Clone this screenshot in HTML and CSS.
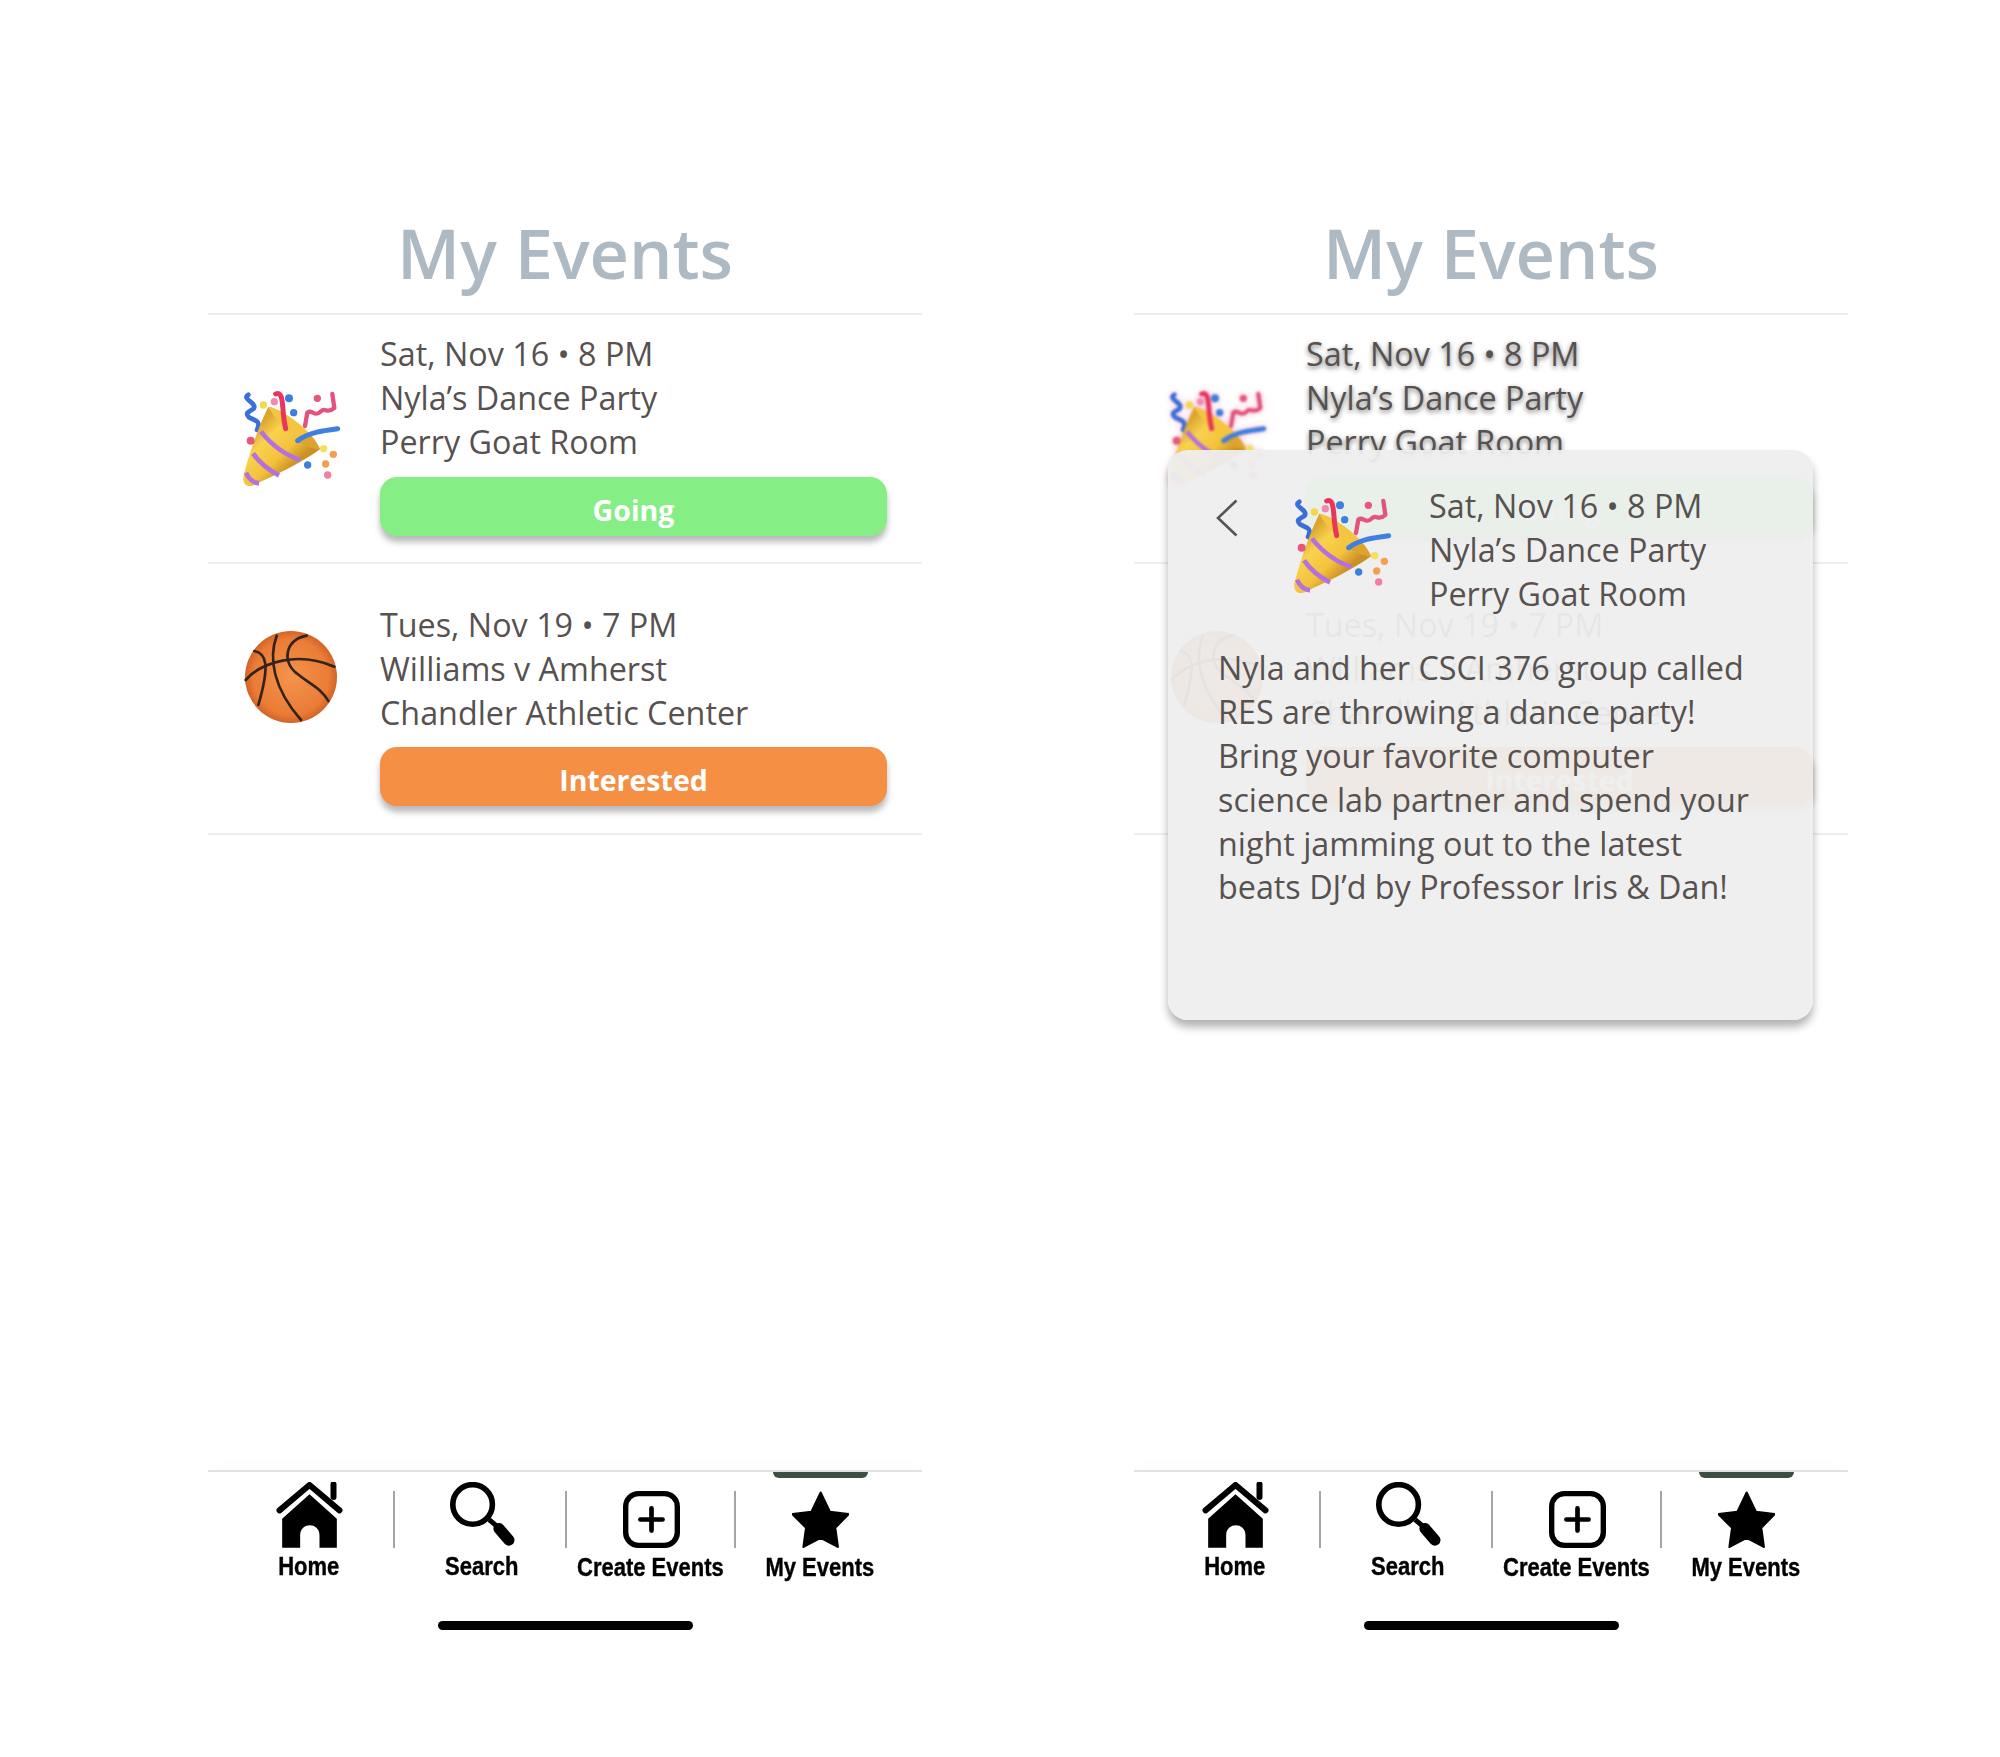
FILE: index.html
```html
<!DOCTYPE html>
<html lang="en">
<head>
<meta charset="utf-8">
<title>My Events</title>
<link rel="stylesheet" href="styles.css">
</head>
<body>
<svg class="defs" aria-hidden="true">
  <defs>
    <linearGradient id="gold" gradientUnits="userSpaceOnUse" x1="85" y1="180" x2="195" y2="295">
      <stop offset="0" stop-color="#dba52e"/>
      <stop offset="0.3" stop-color="#f9d24e"/>
      <stop offset="0.7" stop-color="#f4c23c"/>
      <stop offset="1" stop-color="#cc9126"/>
    </linearGradient>
    <radialGradient id="ballfill" cx="0.5" cy="0.5" r="0.55">
      <stop offset="0" stop-color="#f4934c"/>
      <stop offset="0.75" stop-color="#ea7c36"/>
      <stop offset="1" stop-color="#c4561e"/>
    </radialGradient>
    <symbol id="popper" viewBox="0 0 390 390">
      <path d="M70 74C48 88 98 98 86 116C72 126 58 128 72 142C88 152 110 150 96 180" fill="none" stroke="#3b6fd8" stroke-width="14" stroke-linecap="round"/>
      <path d="M240 168L247 128C262 116 268 144 288 124C300 110 306 134 328 114L322 72" fill="none" stroke="#e2537d" stroke-width="13" stroke-linejoin="round" stroke-linecap="round"/>
      <path d="M130 110C100 170 70 260 55 320C52 346 70 354 90 344C140 320 225 282 285 238C270 190 180 120 130 110Z" fill="url(#gold)"/>
      <path d="M108 185C140 225 180 255 226 270M84 250C105 280 130 300 162 316M63 308C70 325 85 338 102 340" fill="none" stroke="#b470dc" stroke-width="14"/>
      <path d="M130 110C175 118 262 185 285 238C240 232 160 170 130 110Z" fill="#f4c53f"/>
      <path d="M212 208C230 224 258 236 285 238C275 218 264 204 250 190Z" fill="#dca42e"/>
      <path d="M152 72C180 62 168 120 182 176" fill="none" stroke="#e8365d" stroke-width="15" stroke-linecap="round"/>
      <path d="M218 212C250 188 292 182 338 176" fill="none" stroke="#3f7fe0" stroke-width="15" stroke-linecap="round"/>
      <circle cx="115" cy="105" r="11" fill="#f3d84c"/>
      <circle cx="296" cy="236" r="11" fill="#f3e05c"/>
      <circle cx="148" cy="95" r="11" fill="#f08bb0"/>
      <circle cx="192" cy="85" r="12" fill="#3d7fdc"/>
      <circle cx="206" cy="128" r="11" fill="#3d7fdc"/>
      <circle cx="248" cy="285" r="11" fill="#3d7fdc"/>
      <circle cx="77" cy="212" r="12" fill="#e5587c"/>
      <circle cx="277" cy="85" r="11" fill="#e5587c"/>
      <circle cx="308" cy="315" r="11" fill="#f07fa0"/>
      <circle cx="325" cy="253" r="11" fill="#f0a050"/>
      <circle cx="302" cy="282" r="11" fill="#f0a050"/>
    </symbol>
    <symbol id="ball" viewBox="0 0 390 390">
      <circle cx="198" cy="186" r="138" fill="url(#ballfill)"/>
      <g fill="none" stroke="#33231b" stroke-width="8" stroke-linecap="round">
        <path d="M62 195C110 140 220 108 328 155"/>
        <path d="M155 62C130 130 145 220 228 315"/>
        <path d="M245 62C180 75 170 140 215 175C250 205 290 220 310 258"/>
        <path d="M88 108C125 115 135 150 100 270"/>
      </g>
    </symbol>
    <symbol id="home" viewBox="50 55 200 198">
      <path d="M60 140L150 64L240 140" fill="none" stroke="#000" stroke-width="18" stroke-linecap="round" stroke-linejoin="miter"/>
      <path d="M222 62V100" fill="none" stroke="#000" stroke-width="18" stroke-linecap="round"/>
      <path d="M150 92L232 165V252H180V215C180 175 122 175 122 215V252H68V165Z" fill="#000"/>
    </symbol>
    <symbol id="search" viewBox="570 54 200 200">
      <circle cx="640" cy="122" r="60" fill="none" stroke="#000" stroke-width="17"/>
      <path d="M690 168L716 190" stroke="#000" stroke-width="15" fill="none"/>
      <path d="M720 195L750 230" stroke="#000" stroke-width="34" fill="none" stroke-linecap="round"/>
    </symbol>
    <symbol id="plus" viewBox="0 0 170 170">
      <rect x="8" y="8" width="154" height="154" rx="38" fill="none" stroke="#000" stroke-width="16"/>
      <path d="M85 52V118M52 85H118" fill="none" stroke="#000" stroke-width="14" stroke-linecap="round"/>
    </symbol>
    <symbol id="star" viewBox="575 82 173 170">
      <path d="M662 86L690 144L746 151L706 192L714 250L662 222L610 250L618 192L577 151L634 144Z" fill="#000" stroke="#000" stroke-width="7" stroke-linejoin="round"/>
    </symbol>
  </defs>
</svg>

<main class="page">
  <section class="phone">
    <header class="head"><h1 class="title">My Events</h1></header>
    <div class="list">
      <article class="row row-first">
        <svg class="emoji emoji-party"><use href="#popper"/></svg>
        <div class="info">
          <p class="lines">Sat, Nov 16 • 8 PM<br>Nyla’s Dance Party<br>Perry Goat Room</p>
          <div class="status going">Going</div>
        </div>
      </article>
      <article class="row">
        <svg class="emoji emoji-ball"><use href="#ball"/></svg>
        <div class="info">
          <p class="lines">Tues, Nov 19 • 7 PM<br>Williams v Amherst<br>Chandler Athletic Center</p>
          <div class="status interested">Interested</div>
        </div>
      </article>
    </div>
    <nav class="nav">
      <div class="tabs">
        <div class="tab tab-home"><svg class="icon"><use href="#home"/></svg><span class="label">Home</span></div>
        <span class="sep"></span>
        <div class="tab tab-search"><svg class="icon"><use href="#search"/></svg><span class="label">Search</span></div>
        <span class="sep"></span>
        <div class="tab tab-create"><svg class="icon small"><use href="#plus"/></svg><span class="label low">Create Events</span></div>
        <span class="sep"></span>
        <div class="tab tab-mine"><i class="marker"></i><svg class="icon small"><use href="#star"/></svg><span class="label low">My Events</span></div>
      </div>
      <div class="indicator"></div>
    </nav>
  </section>

  <section class="phone">
    <header class="head"><h1 class="title">My Events</h1></header>
    <div class="list">
      <article class="row row-first row-glow">
        <svg class="emoji emoji-party"><use href="#popper"/></svg>
        <div class="info">
          <p class="lines">Sat, Nov 16 • 8 PM<br>Nyla’s Dance Party<br>Perry Goat Room</p>
          <div class="status going">Going</div>
        </div>
      </article>
      <article class="row">
        <svg class="emoji emoji-ball"><use href="#ball"/></svg>
        <div class="info">
          <p class="lines">Tues, Nov 19 • 7 PM<br>Williams v Amherst<br>Chandler Athletic Center</p>
          <div class="status interested">Interested</div>
        </div>
      </article>
    </div>
    <div class="modal">
      <div class="modal-head">
        <svg class="back" viewBox="0 0 22 38"><path d="M20.500 1.500L2 19L20.500 36.500" fill="none" stroke="#555" stroke-width="2.600"/></svg>
        <svg class="emoji modal-emoji"><use href="#popper"/></svg>
        <p class="lines">Sat, Nov 16 • 8 PM<br>Nyla’s Dance Party<br>Perry Goat Room</p>
      </div>
      <p class="lines modal-body">Nyla and her CSCI 376 group called<br>RES are throwing a dance party!<br>Bring your favorite computer<br>science lab partner and spend your<br>night jamming out to the latest<br>beats DJ’d by Professor Iris &amp; Dan!</p>
    </div>
    <nav class="nav">
      <div class="tabs">
        <div class="tab tab-home"><svg class="icon"><use href="#home"/></svg><span class="label">Home</span></div>
        <span class="sep"></span>
        <div class="tab tab-search"><svg class="icon"><use href="#search"/></svg><span class="label">Search</span></div>
        <span class="sep"></span>
        <div class="tab tab-create"><svg class="icon small"><use href="#plus"/></svg><span class="label low">Create Events</span></div>
        <span class="sep"></span>
        <div class="tab tab-mine"><i class="marker"></i><svg class="icon small"><use href="#star"/></svg><span class="label low">My Events</span></div>
      </div>
      <div class="indicator"></div>
    </nav>
  </section>
</main>
</body>
</html>
```

FILE: styles.css
```css
* { box-sizing: border-box; }

html, body {
  margin: 0;
  background: #fff;
}

.defs {
  position: absolute;
  width: 0;
  height: 0;
}

.page {
  display: flex;
  gap: 212px;
  height: 1757px;
  padding-left: 208px;
  font-family: "Open Sans", sans-serif;
}

.phone {
  position: relative;
  display: flex;
  flex-direction: column;
  width: 714px;
  height: 100%;
}

.head {
  padding-top: 213px;
  height: 315px;
  border-bottom: 2px solid #ececec;
}

.title {
  margin: 0;
  font-size: 68.500px;
  line-height: 80px;
  font-weight: 600;
  color: #adb9c3;
  text-align: center;
}

.list {
  flex: 1;
}

.row {
  display: flex;
  align-items: flex-start;
  padding: 39px 0 27px 17px;
  border-bottom: 2px solid #eeeeee;
}

.row-first {
  padding: 17px 0 26px 17px;
}

.emoji {
  flex: none;
  width: 130px;
  height: 130px;
  filter: blur(0.5px);
}

.emoji-party {
  margin-top: 38px;
}

.emoji-ball {
  margin-top: 12px;
}

.info {
  width: 507px;
  margin-left: 25px;
}

.lines {
  margin: 0;
  font-size: 32.300px;
  line-height: 43.800px;
  font-weight: 400;
  color: #575150;
  white-space: nowrap;
}

.status {
  height: 59px;
  margin-top: 12.600px;
  border-radius: 17px;
  font-size: 28.500px;
  line-height: 66px;
  font-weight: 700;
  color: #fff;
  text-align: center;
  box-shadow: 0 6px 6px rgba(0, 0, 0, 0.28);
}

.row-first .status {
  margin-top: 13.600px;
}

.going { background: #85ee85; }
.interested { background: #f58f44; }

.row-glow .lines {
  text-shadow: 0 2px 5px rgba(0, 0, 0, 0.55);
}

.row-glow .emoji {
  filter: blur(0.8px) drop-shadow(0 0 3px rgba(230, 60, 120, 0.35));
}

.modal {
  position: absolute;
  left: 34px;
  top: 450px;
  width: 645px;
  height: 570px;
  padding: 34px 0 0 50px;
  border-radius: 20px;
  background: rgba(238, 238, 238, 0.95);
  box-shadow: 0 7px 8px rgba(0, 0, 0, 0.3);
}

.modal-head {
  display: flex;
  align-items: flex-start;
}

.back {
  flex: none;
  width: 22px;
  height: 38px;
  margin: 15px 0 0 -2px;
}

.modal-emoji {
  margin: -7px 0 0 38px;
}

.modal-head .lines {
  margin-left: 23px;
}

.modal-body {
  margin-top: 31px;
}

.nav {
  height: 287px;
  border-top: 2px solid #e2e2e2;
  box-shadow: 0 -12px 14px -8px rgba(0, 0, 0, 0.025);
  font-family: "Liberation Sans", sans-serif;
}

.tabs {
  display: flex;
  align-items: flex-start;
  padding: 10px 0 0 16px;
}

.tab {
  position: relative;
  display: flex;
  flex-direction: column;
  align-items: center;
  flex: none;
}

.tab-home { width: 169px; }
.tab-search { width: 170px; padding-left: 4px; }
.tab-create { width: 167px; }
.tab-mine { width: 167px; }

.tab-home .icon,
.tab-create .icon,
.tab-mine .icon {
  margin-left: 2px;
}

.icon {
  display: block;
  width: 67px;
  height: 66px;
}

.small {
  width: 57px;
  height: 57px;
  margin-top: 9px;
}

.label {
  margin-top: 3px;
  font-size: 25px;
  line-height: 30px;
  font-weight: 700;
  color: #000;
  white-space: nowrap;
  transform: scaleX(0.88);
  -webkit-text-stroke: 0.4px #000;
}

.low {
  margin-top: 4px;
}

.sep {
  flex: none;
  width: 2px;
  height: 57px;
  margin-top: 9px;
  background: #a5a5a5;
}

.marker {
  position: absolute;
  left: 37px;
  top: -10px;
  width: 95px;
  height: 6px;
  border-radius: 0 0 6px 6px;
  background: #3a5040;
}

.indicator {
  width: 255px;
  height: 9px;
  margin: 39px auto 0;
  border-radius: 5px;
  background: #000;
}
```
